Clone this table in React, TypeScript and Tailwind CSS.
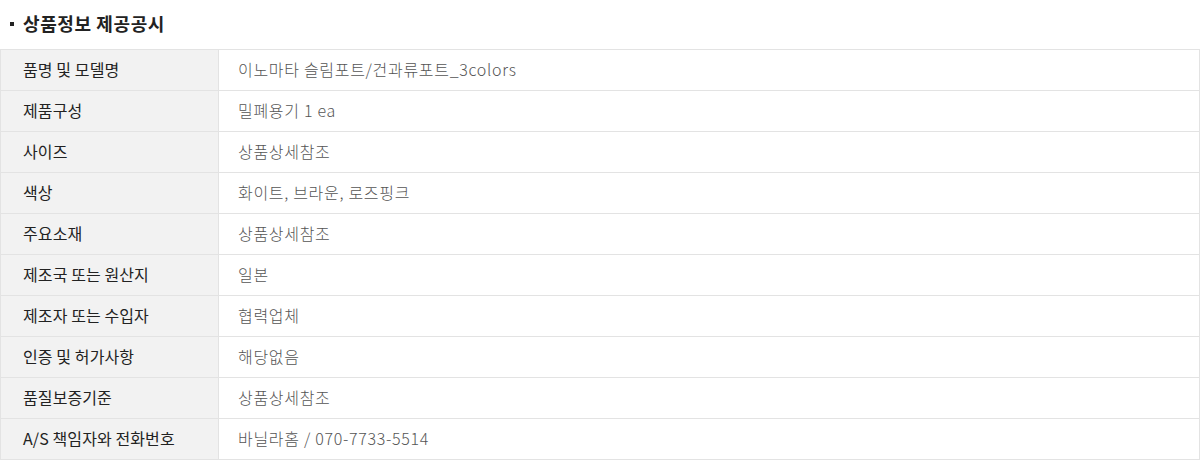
const rows: [string, string][] = [
  ["품명 및 모델명", "이노마타 슬림포트/건과류포트_3colors"],
  ["제품구성", "밀폐용기 1 ea"],
  ["사이즈", "상품상세참조"],
  ["색상", "화이트, 브라운, 로즈핑크"],
  ["주요소재", "상품상세참조"],
  ["제조국 또는 원산지", "일본"],
  ["제조자 또는 수입자", "협력업체"],
  ["인증 및 허가사항", "해당없음"],
  ["품질보증기준", "상품상세참조"],
  ["A/S 책임자와 전화번호", "바닐라홈 / 070-7733-5514"],
];

export default function App() {
  return (
    <div className="w-[1200px] h-[475px] bg-white font-['Noto_Sans_CJK_KR','Noto_Sans',sans-serif]">
      <div className="h-[49px] flex items-center pl-[10px] pb-[2px]">
        <span className="w-[4px] h-[4px] bg-[#222] mr-[9px]" />
        <h2 className="text-[18px] font-bold text-[#222] tracking-[0.6px]">상품정보 제공공시</h2>
      </div>
      <table className="w-full border-collapse border border-[#e3e3e3] text-[16px]">
        <tbody>
          {rows.map(([label, value]) => (
            <tr key={label} className="h-[41px]">
              <th className="w-[218px] border border-[#e3e3e3] bg-[#f2f2f2] pl-[22px] pb-[3px] text-left font-normal text-[#222] tracking-[0.1px] align-middle">
                {label}
              </th>
              <td className="border border-[#e3e3e3] pl-[19px] pb-[3px] font-light text-[#555] tracking-[0.7px] align-middle">
                {value}
              </td>
            </tr>
          ))}
        </tbody>
      </table>
    </div>
  );
}
